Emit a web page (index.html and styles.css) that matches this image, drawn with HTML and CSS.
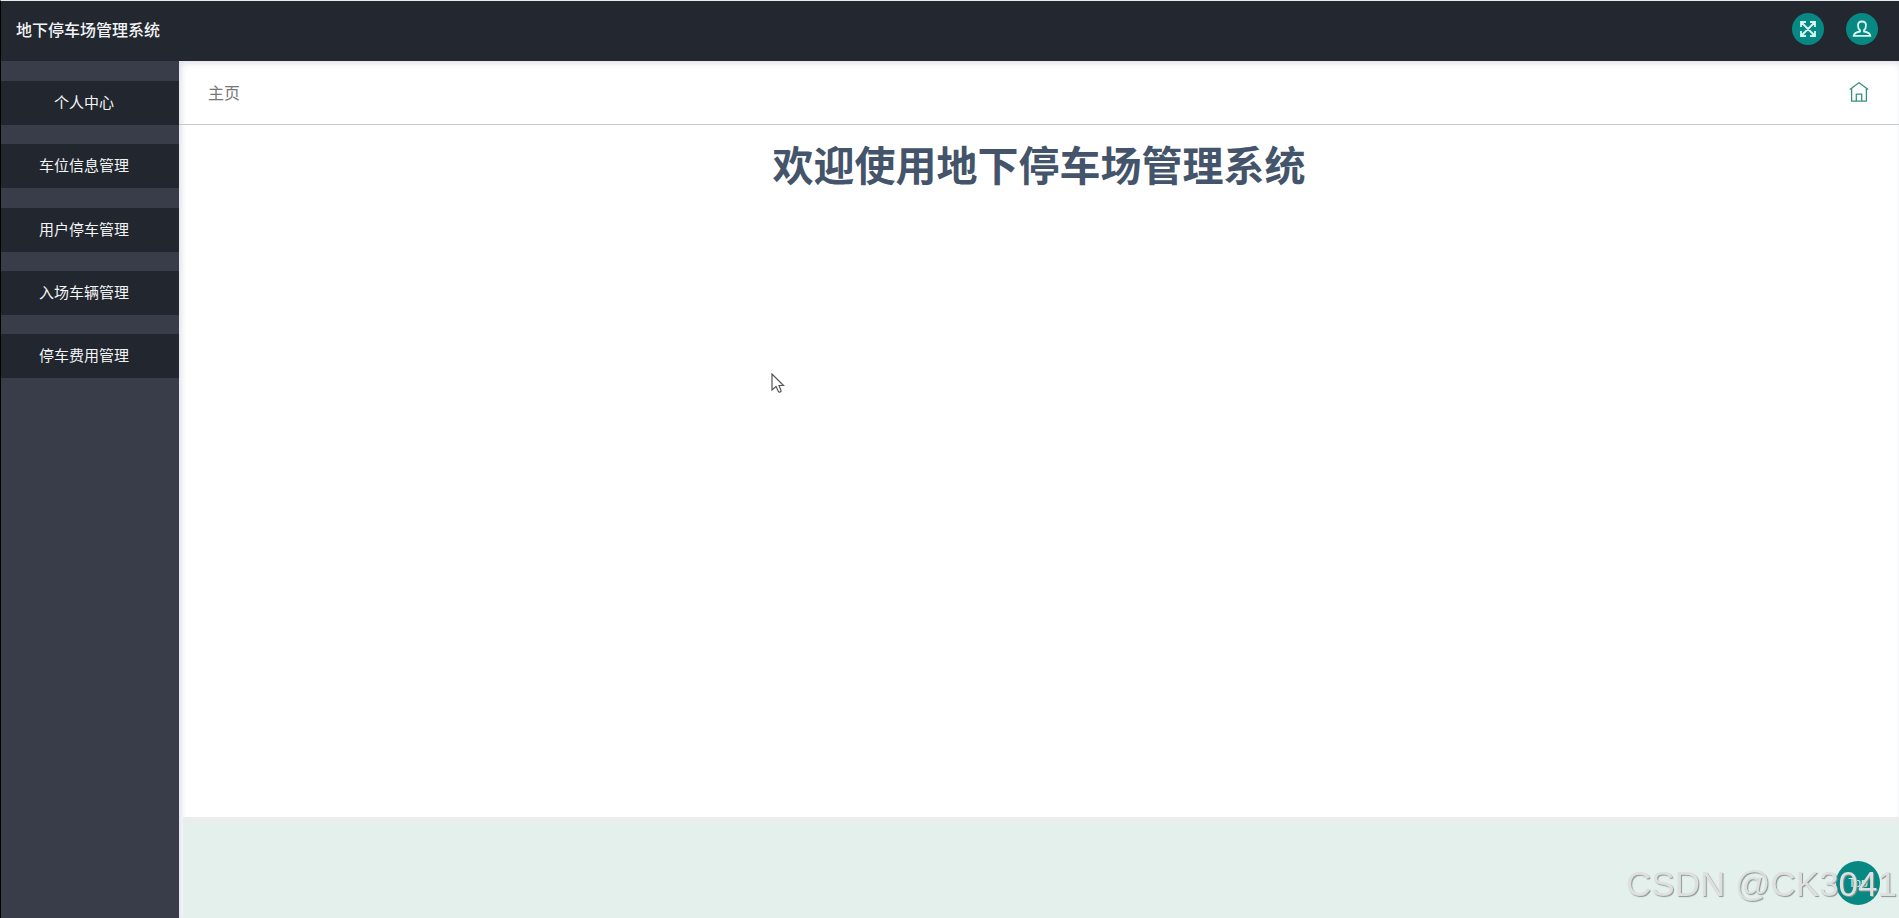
FILE: index.html
```html
<!DOCTYPE html>
<html lang="zh-CN">
<head>
<meta charset="utf-8">
<title>地下停车场管理系统</title>
<link rel="stylesheet" href="styles.css">
</head>
<body>
<header class="topbar">
  <div class="brand">地下停车场管理系统</div>
  <div class="actions">
    <button class="round" type="button" aria-label="全屏">
      <svg width="32" height="32" viewBox="0 0 32 32"><path d="M9 9l14 14M23 9L9 23M9 14V9h5M18 9h5v5M23 18v5h-5M14 23H9v-5"/></svg>
    </button>
    <button class="round" type="button" aria-label="用户">
      <svg width="32" height="32" viewBox="0 0 32 32"><path d="M16 8.500c-2.600 0-4 1.700-4 4 0 2.200.8 3.700 2 4.700v1.300c-3.200.6-5.800 1.500-6.300 4.300h16.600c-.5-2.800-3.100-3.700-6.300-4.300v-1.300c1.200-1 2-2.500 2-4.700 0-2.300-1.400-4-4-4z"/></svg>
    </button>
  </div>
</header>
<div class="layout">
  <nav class="sidebar">
    <div class="menu">
      <a class="item" href="#">个人中心</a>
      <a class="item" href="#">车位信息管理</a>
      <a class="item" href="#">用户停车管理</a>
      <a class="item" href="#">入场车辆管理</a>
      <a class="item" href="#">停车费用管理</a>
    </div>
  </nav>
  <main class="main">
    <div class="crumbs">
      <span>主页</span>
      <a class="home" href="#" aria-label="主页">
        <svg width="20" height="20" viewBox="0 0 20 20"><path d="M.8 7.500L10 .8l9.200 6.700M2.600 6.500v12.700h14.800V6.500M7.300 19v-6.800h5.400V19"/></svg>
      </a>
    </div>
    <section class="content"><h1 class="welcome">欢迎使用地下停车场管理系统</h1></section>
    <footer class="footer"></footer>
  </main>
</div>
<button class="to-top" type="button">Top</button>
<div class="watermark">CSDN @CK3041</div>
<svg class="cursor" width="14" height="22" viewBox="0 0 14 22"><path d="M1 1v16l4-3.500 2.500 5.200c.7 1 2.900.2 2.500-1.200L8 12.500h4.500z"/></svg>
</body>
</html>
```
FILE: styles.css
```css
* {
  box-sizing: border-box;
}

body {
  display: flex;
  flex-direction: column;
  min-height: 100vh;
  margin: 0;
  border-top: 1px solid #e4f0eb;
  border-left: 1px solid #000;
  background: #fff;
  font-family: "Liberation Sans", "Noto Sans CJK SC", sans-serif;
}

.topbar {
  display: flex;
  align-items: center;
  justify-content: space-between;
  height: 60px;
  padding: 0 21px 0 15px;
  background: #23272f;
}

.brand {
  color: #f2f4f6;
  font-size: 16px;
  font-weight: 500;
  line-height: 24px;
}

.actions {
  display: flex;
  gap: 22px;
  padding-bottom: 4px;
}

.round {
  width: 32px;
  height: 32px;
  padding: 0;
  border: 0;
  border-radius: 50%;
  background: #078882;
}

.round svg {
  display: block;
  fill: none;
  stroke: #d8f6f4;
  stroke-width: 1.8;
}

.layout {
  display: flex;
  flex: 1;
}

.sidebar {
  width: 178px;
  padding-top: 20px;
  background: #393d49;
}

.menu {
  display: flex;
  flex-direction: column;
  justify-content: space-between;
  min-height: 297px;
}

.item {
  padding: 10px 12px 10px 0;
  background: #22262e;
  color: #f2f4f6;
  font-size: 15px;
  line-height: 24px;
  text-align: center;
  text-decoration: none;
}

.main {
  display: flex;
  flex: 1;
  flex-direction: column;
  box-shadow: inset 2px 2px 6px #dcdde6;
}

.crumbs {
  display: flex;
  align-items: center;
  justify-content: space-between;
  height: 64px;
  padding: 2px 30px 0 29px;
  border-bottom: 1px solid #c8c8c8;
  color: #777;
  font-size: 16px;
  line-height: 24px;
}

.home {
  padding-bottom: 4px;
}

.home svg {
  display: block;
  fill: none;
  stroke: #36917c;
  stroke-width: 1.3;
}

.content {
  flex: 1;
}

.welcome {
  margin: 0;
  padding-top: 12px;
  color: #44546a;
  font-size: 41px;
  font-weight: 700;
  line-height: 60px;
  text-align: center;
}

.footer {
  height: 101px;
  margin-left: 4px;
  border-top: 7px solid #e9eeed;
  background: #e4f0eb;
}

.to-top {
  position: fixed;
  right: 19px;
  bottom: 13px;
  width: 44px;
  height: 44px;
  padding: 0;
  border: 0;
  border-radius: 50%;
  background: #078882;
  color: #d8f6f4;
  font-family: inherit;
  font-size: 12px;
}

.watermark {
  position: fixed;
  right: 2px;
  bottom: 14px;
  color: #dedfdf;
  font-size: 35px;
  line-height: 40px;
  text-shadow: 1px 1px 1px #8c9492;
  pointer-events: none;
}

.cursor {
  position: fixed;
  top: 373px;
  left: 771px;
  fill: #fff;
  stroke: #555;
  stroke-width: 1.2;
  pointer-events: none;
}
```
